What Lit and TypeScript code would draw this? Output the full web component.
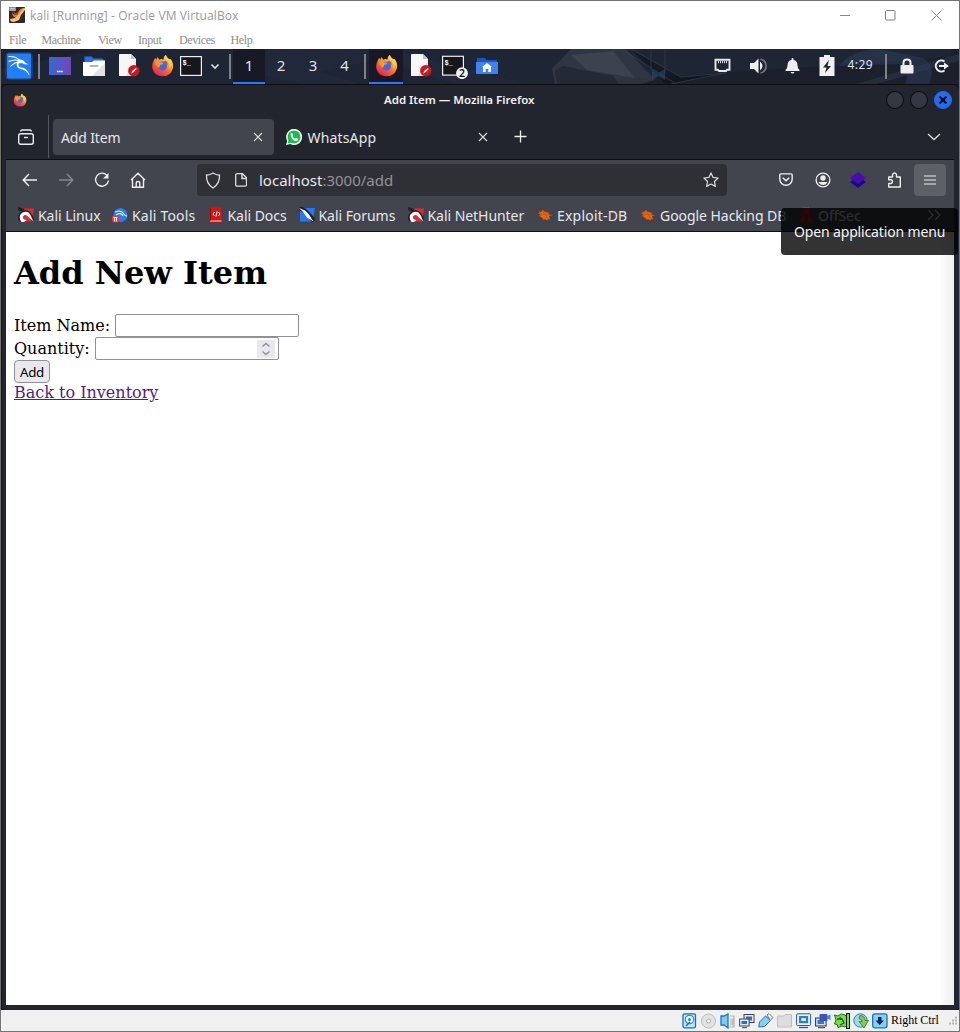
import { LitElement, html, svg, css } from "lit";
import { customElement } from "lit/decorators.js";

const icon = (w: number, h: number, body: unknown, vb = `0 0 ${w} ${h}`) =>
  html`<svg class="ic" width=${w} height=${h} viewBox=${vb} fill="none">${body}</svg>`;

const foxArt = svg`
  <defs>
    <linearGradient id="fx" x1="19" y1="2" x2="6" y2="22" gradientUnits="userSpaceOnUse">
      <stop offset="0" stop-color="#ffe94a"/><stop offset=".35" stop-color="#ffa52c"/><stop offset=".65" stop-color="#ff5a35"/><stop offset="1" stop-color="#e5264f"/>
    </linearGradient>
  </defs>
  <path d="M3 6.5 4.5 4l1 2L7 3l1.500 3Q11 4.500 13 6Q12.500 3 15.500 .8Q16 3.500 19 5.500Q20 6 20.500 5Q24 10 22.800 15Q20.500 23.300 12 23.300Q3.500 23 1.400 15Q.6 10.500 3 6.500Z" fill="url(#fx)"/>
  <circle cx="12" cy="12.600" r="4.800" fill="#3f6be8"/>
  <path d="M13 8a5 5 0 0 1 4 4q1-3-1.500-5Z" fill="#7a4ad8"/>
  <path d="M4 8.500Q6.500 6.500 9 8.500L13 9Q12.500 11 10 11.200Q8.500 12 9 13.500Q6.500 14.500 5.500 12Z" fill="#ff9a2e"/>
  <path d="M15.500 1Q15 5.500 18 8Q20.500 11 18.500 16Q23 12 20.500 6.500Q16 4 15.500 1Z" fill="#ffd83f" opacity=".75"/>`;
const fox = (s: number) => icon(s, s, foxArt, "0 0 24 24");

const kali = icon(30, 30, svg`
  <rect x="1" y="1" width="28" height="28" rx="5" fill="#1664e8" opacity=".35"/>
  <rect x="3" y="2.500" width="24" height="25" rx="1" fill="#1f80fa"/>
  <path d="M4.500 5.500Q12 5 16 9.500M4.500 10.500Q10 8 16 9.500M6.500 15.500Q10 11.500 16.500 10.500" stroke="#fff" stroke-width="1.100"/>
  <path d="M14 8.500Q19.500 8 21 11.500L24.500 13.500L20.500 13.200Q16 10.800 14.500 13.200Q14 16 18 16.500Q24 17.500 25.500 25Q22.500 18.800 17.500 18.200Q12.300 17.500 12.700 12.500Z" fill="#fff"/>`);

const folder = icon(22, 22, svg`
  <path d="M1.500 1.500h7l2 2H19q1.500 0 1.500 1.500V10h-19Z" fill="#2d6fe0"/>
  <path d="M0 7h9l2-1.500h11V20q0 1-1 1H1q-1 0-1-1Z" fill="#fff"/><path d="M22 8V20q0 1-1 1H9Z" fill="#e2e2e2"/>
  <rect x="6.500" y="10" width="9" height="2" rx="1" fill="#b5b5b5"/>`);

const doc = icon(22, 23, svg`
  <path d="M1.500 0H13l5 5v17h-17V.5Z" fill="#f7f7f7"/><path d="M13 0v5h5Z" fill="#c3c3c3"/><path d="M18 7v15H8Z" fill="#e2e2e2"/>
  <circle cx="15.800" cy="16.800" r="5.700" fill="#ce181d"/><path d="m13.200 19.500 1-2.500 3.600-3 .9 1-3.500 3.500Z" fill="#fff"/>`);

const termBody = svg`
  <rect x=".6" y="2.600" width="20.800" height="18.800" fill="#15171a" stroke="#eee" stroke-width="1.200"/>
  <text x="2.500" y="11" font-size="7" font-weight="700" fill="#fff" font-family="Liberation Mono, monospace">$_</text>`;
const term = icon(26, 24, termBody);
const termBadge = icon(28, 26, svg`<g transform="translate(0 .7)">${termBody}</g>
  <circle cx="20" cy="20.200" r="5.900" fill="#f2f2f2"/>
  <text x="20" y="24" text-anchor="middle" font-size="10.500" font-weight="600" fill="#111" font-family="Noto Sans, sans-serif">2</text>`);

const dragon = (c: string) => icon(16, 16, svg`
  <path d="M2 1.500h14l-2.500 13H6Z" fill=${c}/>
  <path d="M0 1.500 6 3.500M2.500 14Q0 7.500 6 5Q10 4 12 7.500l3.500 6" stroke="#222" stroke-width="3.200"/>
  <path d="M6 15H3.500Q-.5 9 4.500 5.500Q10 3 12.500 8l3 6.500L10.500 10Q7.500 6.500 5 9.500Q4.500 12.500 8.500 13Z" fill="#fff"/>`);

const bug = icon(16, 16, svg`
  <path d="m2 4.500 2 .5 2-2 1 1.500 3 .8 2 2 1.500 1.500-1.500.5 1 3-2-.5-.5 1.700-2-1.200-2.500.2-.3-1.500-2.200-1-.5-2.500Z" fill="#f0640f"/>
  <path d="m1 6.500 14 2M5 3l6.500 9.500M1.500 9 5 8M12 5l-1 2" stroke="#c9530c" stroke-width=".8"/>`);

const I = {
  vbox: icon(16, 16, svg`<rect width="16" height="16" rx="1" fill="#2b2a33"/><rect x="0" y="0" width="7" height="4" fill="#8a8a90"/><path d="M1 1.500h5M1 3h5" stroke="#ddd" stroke-width=".7"/><path d="M3 5q1 4 5 2.500l2-4q1-2 4-2.500h2l-3 3.500Q11 10 7 10.500Q3 10 3 5Z" fill="#ef7a30"/><path d="M4.500 5q3 2.500 5-.5l-1 4Q5 8 4.500 5Z" fill="#c9401c"/><path d="m1 12 5-1 4-4 4-5 2-1v2l-4 5-2 5-5 2Q1 15 1 12Z" fill="#ffc069"/>`),
  min: icon(11, 11, svg`<path d="M0 5.500h10" stroke="#888"/>`),
  max: icon(11, 11, svg`<rect x=".5" y=".5" width="9.500" height="9.500" rx="1" stroke="#808080"/>`),
  close: icon(11, 11, svg`<path d="m.5.5 10 10m0-10-10 10" stroke="#888"/>`),
  desk: icon(22, 22, svg`<defs><linearGradient id="dk"><stop stop-color="#3667d6"/><stop offset="1" stop-color="#7147b5"/></linearGradient></defs><rect y="2" width="22" height="18" fill="url(#dk)"/><path d="M8 16.500h6" stroke="#fff" stroke-width="1.300" stroke-dasharray="1.600 .5"/>`),
  chev: icon(10, 10, svg`<path d="m1.500 3.500 3.500 3.500 3.500-3.500" stroke="#ddd" stroke-width="1.700"/>`),
  home: icon(22, 20, svg`<path d="M1 2h8l1.500 2H20q1 0 1 1v4H1Z" fill="#1e55bd"/><path d="M0 6h22v11q0 1-1 1H1q-1 0-1-1Z" fill="#3d82f2"/><path d="m11 7 5 4h-1v5h-2.700v-3H9.700v3H7v-5H6Z" fill="#fff"/>`),
  net: icon(17, 15, svg`<path d="M1.500 1.800h14v10h-2.500l-1 1.200H5l-1-1.200H1.500Z" stroke="#e8e8e8" stroke-width="1.900"/><path d="M4.500 3v2.200M6.500 3v2.200M8.500 3v2.200M10.500 3v2.200M12.500 3v2.200" stroke="#ddd"/>`),
  vol: icon(18, 18, svg`<path d="M0 6h4l4.500-4.500v15L4 12H0Z" fill="#eee"/><path d="M10 4.500q5 4.500 0 9Z" fill="#eee"/><path d="M10.500 2Q16 3.500 16 9t-5.500 7" stroke="#70757d" stroke-width="1.700"/>`),
  bell: icon(15, 16, svg`<path d="M6.500 2V1q0-1 1-1t1 1v1q4 .7 4 5.500 0 3 2 4.500V13H.5v-1q2-1.500 2-4.500 0-4.800 4-5.500ZM5.500 14h4q-.5 1.500-2 1.500T5.500 14Z" fill="#eee"/>`),
  bat: icon(16, 21, svg`<path d="M5 0h6v2h4.500v19H.5V2H5Z" fill="#f0f0f0"/><path d="m10 5-6 7.500h3.500L6 18l6-7H8.500Z" fill="#1e212c"/>`),
  lock: icon(14, 16, svg`<rect x=".5" y="7" width="13" height="8.500" rx="1" fill="#eee"/><path d="M3.500 8V4.500Q3.500 1.500 7 1.500T10.500 4.500V8" stroke="#eee" stroke-width="2"/>`),
  out: icon(15, 16, svg`<path d="M10.500 3.500A5.500 5.500 0 1 0 10.500 12.500" stroke="#eee" stroke-width="2"/><path d="M5 7h5V4.500L15 8l-5 3.500V9H5Z" fill="#eee"/>`),
  view: icon(16, 16, svg`<rect x=".7" y="4.700" width="14.600" height="10.600" rx="2" stroke="#eee" stroke-width="1.400"/><path d="M2.500 2.500Q3 1 4 1h8q1 0 1.500 1.500" stroke="#eee" stroke-width="1.400"/><path d="M6 8.500h4" stroke="#eee" stroke-width="1.400"/>`),
  x: icon(10, 10, svg`<path d="m1 1 8 8m0-8-8 8" stroke="#ddd" stroke-width="1.100"/>`),
  wa: icon(16, 16, svg`<path d="M0 16 1.200 12A8 8 0 1 1 4.300 15Z" fill="#fff"/><circle cx="8" cy="7.900" r="6.500" fill="#19bd4a"/><path d="M1.500 14.500 3 10l2.500 3.500Z" fill="#19bd4a"/><path d="M4.500 5Q5 3.800 6.300 4.300L7.200 6.300 6.500 7.200Q7.500 9 9.300 9.700l.9-.9 2 1q.2 2-2 2.200-5-.5-5.700-7Z" fill="#fff"/>`),
  plus: icon(13, 13, svg`<path d="M6.500.5v12M.5 6.500h12" stroke="#eee" stroke-width="1.300"/>`),
  down: icon(14, 8, svg`<path d="m1 1 6 5.500L13 1" stroke="#ddd" stroke-width="1.300"/>`),
  back: icon(16, 14, svg`<path d="M15 7H1.500M7 1 1.200 7 7 13" stroke="#eee" stroke-width="1.400"/>`),
  fwd: icon(16, 14, svg`<path d="M1 7h13.500M9 1l5.800 6L9 13" stroke="#87888d" stroke-width="1.400"/>`),
  reload: icon(16, 16, svg`<path d="M12.800 3.200A6.500 6.500 0 1 0 14.500 8.500" stroke="#eee" stroke-width="1.400"/><path d="M14.500 1v5.500H9Z" fill="#eee"/>`),
  house: icon(16, 16, svg`<path d="M1 8 8 1.200 15 8M2.500 7v8.200h11V7M6.200 15v-4q0-1.500 1.800-1.500t1.800 1.500v4" stroke="#eee" stroke-width="1.400"/>`),
  shield: icon(16, 17, svg`<path d="M8 1q3.500 2.300 6.500 2Q15 11.500 8 16 1 11.500 1.500 3 4.500 3.300 8 1Z" stroke="#ddd" stroke-width="1.300"/>`),
  page: icon(12, 14, svg`<path d="M2.500.7H7.500l4 4v7q0 1.500-1.500 1.500H2.200Q.7 13.200.7 11.700V2.200Q.7.700 2.500.7Z" stroke="#ddd" stroke-width="1.300"/><path d="M7 1v4.500h4.500" stroke="#ddd" stroke-width="1.500"/>`),
  star: icon(16, 16, svg`<path d="m8 .9 2.100 4.500 5 .6-3.700 3.500 1 4.900L8 12l-4.400 2.400 1-4.900L.9 6l5-.6Z" stroke="#ddd" stroke-width="1.200" stroke-linejoin="round"/>`),
  pocket: icon(14, 14, svg`<path d="M2 .9h10q1.200 0 1.200 1.200V6A6.200 6.200 0 0 1 .8 6V2.100Q.8.900 2 .9Z" stroke="#eee" stroke-width="1.400"/><path d="m3.800 4.800 3.200 3 3.200-3" stroke="#eee" stroke-width="1.500"/>`),
  acct: icon(16, 16, svg`<circle cx="8" cy="8" r="6.900" stroke="#eee" stroke-width="1.300"/><circle cx="8" cy="6" r="2.700" fill="#eee"/><path d="M3.500 10h9q-1.500 3-4.500 3t-4.500-3Z" fill="#eee"/>`),
  layers: icon(16, 16, svg`<path d="m0 10 8-5 8 5-8 6Z" fill="#1e0786"/><path d="m0 6 8-6 8 6-8 6Z" fill="#460db0"/>`),
  ext: icon(15, 16, svg`<path d="M1.700 15V11.500H4Q5.500 11 5.500 9.500T4 7.800H1.700V5H5.500V3Q5.700 1 7.500 1T9.500 3v2h3.800v10Z" stroke="#eee" stroke-width="1.400" stroke-linejoin="round"/>`),
  menu: icon(12, 11, svg`<path d="M0 1h12M0 5h12M0 9h12" stroke="#eee" stroke-width="1.200"/>`),
  tools: icon(16, 16, svg`<circle cx="8.500" cy="8" r="7" fill="#2a7de8"/><path d="M3 5q6-2 8 1t4 3M4 8q5-3 7 1" stroke="#cfe5ff" stroke-width="1.300"/><rect y="8.500" width="7" height="7" rx="2" fill="#e23b3b"/><path d="M1.500 10.500h4M2.700 10.500v4M4.500 10.500v4" stroke="#fff"/>`),
  docs: icon(16, 16, svg`<rect x="1.500" y=".5" width="12" height="15" rx="1" fill="#d91313"/><path d="M2 14h11.500" stroke="#ddd"/><path d="M2.500 1v12.500" stroke="#93090c"/><path d="M6.500 5 5 7l1.500 2m4-4L12 7l-1.500 2M9 4.500l-1 5" stroke="#fff"/>`),
  forums: icon(16, 16, svg`<path d="M1 1h15l-2.500 13.500H1Z" fill="#2379f4"/><path d="M0 .5 6 4l5 5 4 5" stroke="#222" stroke-width="4.500"/><path d="M0 1 6 3.500l4 4 4.500 7L8 10.500 4 5Z" fill="#fff"/>`),
  off: icon(16, 16, svg`<path d="M5 0h6v8l3 4v3.500H9.500V8h-3v7.500H2V12l3-4Z" fill="#ff0d16"/>`),
  more: icon(14, 12, svg`<path d="m1 1 5 5-5 5M8 1l5 5-5 5" stroke="#ddd" stroke-width="1.300"/>`),
};

const st = (b: unknown) => icon(16, 16, b);
const statusIcons = [
  st(svg`<rect x="1" y=".8" width="12.500" height="14" rx="1.500" fill="#bfe6ff" stroke="#1670b8" stroke-width="1.300"/><circle cx="7.500" cy="6.500" r="4.200" fill="#fff" stroke="#2a92dc" stroke-width="1.300"/><circle cx="7.500" cy="6.500" r="1.500" fill="#2280c8"/><path d="m4 13 4-4" stroke="#1670b8" stroke-width="1.500"/>`),
  st(svg`<circle cx="7.500" cy="8" r="7" fill="#e2e2e2" stroke="#bcbcbc"/><circle cx="7.500" cy="8" r="2" fill="#f5f5f5" stroke="#aaa"/>`),
  st(svg`<path d="M1 3h3l4-2v14l-4-3H1Z" fill="#7ccbf7" stroke="#1678bb" stroke-width="1.300"/><path d="M10 3h4v11h-5M11 5.500v7M12.800 5.500v7" stroke="#b3b3b3" stroke-width="1.200"/>`),
  st(svg`<rect x="5" y="1.500" width="10" height="8" fill="#dbe9f7" stroke="#444"/><rect x="7" y="3.500" width="6" height="4" fill="#2d72d2"/><rect x=".6" y="6" width="9.500" height="7" fill="#dbe9f7" stroke="#444"/><rect x="2.500" y="8" width="5.500" height="3" fill="#2670d0"/><path d="M3 14.700h5" stroke="#444"/>`),
  st(svg`<path d="m.8 14 .7-5 6-6 5 4.500-6 6Z" fill="#86cdf8" stroke="#1b70b5" stroke-linejoin="round"/><path d="m9 2 2-1.500L15 4.500l-2.500 3Z" fill="#eee" stroke="#777"/>`),
  st(svg`<path d="M.5 3h6L8 1.500h6.500v12.500H.5Z" fill="#ddd" stroke="#bebebe"/>`),
  st(svg`<rect x=".6" y=".8" width="14" height="11.700" rx="1" fill="#eaf3fc" stroke="#265a9b"/><rect x="3" y="3" width="9.200" height="7.200" fill="#2b7ed2"/><rect x="5.300" y="5.200" width="4.600" height="2.800" fill="#e7f5ff"/><path d="M3 14.500h9" stroke="#265a9b" stroke-width="1.300"/>`),
  st(svg`<rect x=".6" y="5" width="10.500" height="8" fill="#d4e3f4" stroke="#333"/><rect x="2.500" y="7" width="6.500" height="4" fill="#3477c4"/><rect x="4.500" y="1" width="8" height="7" rx="1" fill="#3858b8"/><path d="m12 3 3.500-1.500V7L12 5.500" fill="#5a80da"/><path d="M3 14.700h7" stroke="#333"/>`),
  st(svg`<path d="M.5 2 4 3l3-2 4 1 2 2v8l-2 2-3-1-4 1.500-1-3L.5 11l1.500-4Z" fill="#79dc46" stroke="#237218"/><path d="M3 6h5l2 4-4 2M6 4l1 3" stroke="#176611" stroke-width="1.300"/><rect x="12" y="0" width="4" height="16" fill="#111"/><rect x="13" y="1" width="2" height="14" fill="#7fd65a"/>`),
  st(svg`<circle cx="7.500" cy="7.500" r="6.700" fill="#a5d6f5" stroke="#2a7fba"/><path d="M7 2.500q5 0 5 5h3.500L11 15 6 8.500h3Q9 6 6 5.500Z" fill="#7ed04a" stroke="#357d1a" stroke-width=".8"/>`),
  st(svg`<rect x=".7" y=".8" width="14.300" height="14" rx="2" fill="#86cff9" stroke="#1672b4" stroke-width="1.300"/><path d="M6 4h3.500v3.500H12L7.700 12 3.500 7.500H6Z" fill="#082b52"/>`),
];

@customElement("app-root")
export class AppRoot extends LitElement {
  static styles = css`
    :host { display: block; width: 960px; height: 1032px; overflow: hidden; }
    * { box-sizing: border-box; }
    .ic { display: block; flex: none; }
    .vm { height: 1032px; border: 1px solid #747474; display: flex; flex-direction: column; background: #fff; }
    .row { display: grid; align-items: center; white-space: nowrap; flex: none; }
    .title { height: 30px; padding-bottom: 2px; grid-template-columns: 8px 21px 810px 45px 46px 27px; font: 12px "Open Sans", "Noto Sans", sans-serif; color: #999; }
    .title .cap { letter-spacing: .1px; }
    .menu { height: 18px; grid-template-columns: 8px 32.500px 56.500px 40px 41px 51.500px 40px; font: 12px "Liberation Serif", serif; letter-spacing: -.4px; color: #8c8c8c; }
    .panel { height: 35px; position: relative; background: #1c202d; grid-template-columns: 3px 34px 11px 34px 35px 32.500px 29.500px 30px 18.500px 4.500px 32px 32px 31.500px 35.500px 5px 34px 7px 32px 34px 238px 35.500px 35.500px 33.500px 29px 37.500px 15px 33.500px 15px;
      color: #dfe3e8; font: 15px "Noto Sans", sans-serif; }
    .wall { position: absolute; left: 0; top: 0; }
    .panel > :not(.wall) { position: relative; }
    .panel > .ic { margin-bottom: 1.500px; }
    .sep { width: 2px; height: 25px; background: #7f828a; }
    .ws { height: 35px; width: 32px; display: grid; place-items: center; padding-bottom: 3px; }
    .on { background: #171a26; border-bottom: 2px solid #2777ff; padding-bottom: 1px; }
    .task { height: 35px; width: 34px; display: grid; place-items: center; padding-bottom: 0; }
    .clock { font-size: 12px; letter-spacing: .4px; padding-bottom: 4px; }
    .under { background: #151a2b; }
    .ff { flex: none; width: 958px; height: 926px; background: #22252e; border-top: 1px solid #0c0d11; border-left: 1px solid #14161c; border-radius: 6px 6px 5px 5px; padding: 0 5px 5px 4px; display: flex; flex-direction: column; font: 14px "Noto Sans", sans-serif; color: #e6e7ea; }
    .ftitle { height: 30px; grid-template-columns: 7px 371px 502px 24px 24px 20px; }
    .ftitle b { font-size: 11.500px; font-weight: 600; color: #f2f2f2; padding-bottom: 2px; }
    .dot { width: 18px; height: 18px; border-radius: 50%; background: #353743; border: 1px solid #08090c; }
    .dot.x { background: #246cf0; border-color: #246cf0; display: grid; place-items: center; }
    .tabs { height: 45px; padding-bottom: 1px; grid-template-columns: 12px 30px 5px 233px 21.500px 170.500px 36px 413px 20px; border-bottom: 1px solid #0d0e12; }
    .vline { width: 1px; height: 43px; background: #55575f; align-self: end; }
    .tab { width: 221px; height: 36px; border-radius: 4px; background: #43454e; display: flex; justify-content: space-between; align-items: center; padding: 0 11px 0 8px; letter-spacing: -.15px; }
    .tab > span, .tabs > .wide { padding-top: 2px; }
    .wide { letter-spacing: .15px; }
    .bars { background: #43454e; border-bottom: 1px solid #0d0e12; height: 72px; }
    .nav { height: 40px; grid-template-columns: 16px 36px 36px 35.500px 67.500px 582px 36px 35px 36.500px 27.500px 32px; }
    .url { width: 530px; height: 32px; border-radius: 4px; background: #2f3036; display: grid; grid-template-columns: 8px 30px 24px 444px 16px; align-items: center; font-size: 15px; }
    .url i { font-style: normal; color: #929398; }
    .mbtn { width: 32px; height: 32px; background: #5e6067; border-radius: 4px; display: grid; place-items: center; }
    .marks { height: 30px; grid-template-columns: 12px 94px 95.500px 91px 109px 129.500px 103px 158px 129px 14px; }
    .marks > span { display: flex; gap: 4px; align-items: center; letter-spacing: -.05px; }
    .marks .wide { letter-spacing: .2px; }
    .page { flex: 1; background: linear-gradient(90deg, #fff 932px, #efefef 948px); padding: 22.500px 8px 0; font: 16px/19px "DejaVu Serif", serif; color: #000; display: flex; flex-direction: column; align-items: flex-start; }
    h1 { font-size: 32px; line-height: 37px; margin: 0 0 22.500px; }
    .field { display: flex; align-items: center; height: 23px; gap: 5px; white-space: nowrap; }
    .box { width: 184px; height: 23px; border: 1px solid #8f8f9d; border-radius: 2px; background: #fff; display: flex; justify-content: flex-end; align-items: center; padding: 0 3px; }
    input { border: 0; outline: 0; background: none; padding: 0; margin: 0; flex: 1; min-width: 0; height: 19px; }
    .spin { width: 18px; height: 18px; background: #e9e9ed; display: grid; place-items: center; }
    button { width: 36px; height: 23px; border: 1px solid #8f8f9d; border-radius: 4px; background: #e9e9ed; font: 13.330px "Noto Sans", sans-serif; letter-spacing: -.3px; padding: 0; color: #000; line-height: 20px; }
    a { color: #551a8b; }
    .tip { position: absolute; left: 781px; top: 208px; width: 177px; height: 47px; border-radius: 4px; background: rgba(0,0,0,.8); color: #f5f5f5; font: 14px/47px "Noto Sans", sans-serif; letter-spacing: -.15px; padding-left: 13px; white-space: nowrap; }
    .status { height: 21px; background: #f0f0f0; grid-template-columns: 681px repeat(11, 19px) 56.500px 10px; font: 12px "Liberation Serif", serif; letter-spacing: -.05px; color: #000; }
  `;

  render() {
    const mark = (i: unknown, t: string, cls = "") => html`<span>${i}<span class=${cls}>${t}</span></span>`;
    return html`
      <div class="vm">
        <div class="row title"><span></span>${I.vbox}<span class="cap">kali [Running] - Oracle VM VirtualBox</span>${I.min}${I.max}${I.close}</div>
        <div class="row menu"><span></span><span>File</span><span>Machine</span><span>View</span><span>Input</span><span>Devices</span><span>Help</span></div>
        <div class="row panel">
          <svg class="wall" width="958" height="35" viewBox="0 0 958 35">
            <path d="M100 0h850v8L780 20 560 35H0V20Z" fill="#20293b" opacity=".5"/>
            <path d="M230 0 255 25 300 35h60l-40-12 55-12 80 24h70L390 0Z" fill="#27354a" opacity=".25"/>
            <path d="M551 20 570 0h55l29 31-14 4h-86Z" fill="#444955" opacity=".45"/>
            <path d="m570 6 42-4 22 27-48-8Z" fill="#4b505c" opacity=".5"/>
            <path d="m554 22 8-5 50 10 6 8h-62Z" fill="#242936"/>
            <path d="M625 3 675 35M650 0v22M664 0v24M630 0l50 28 45-4-60 12" stroke="#566070" opacity=".3"/>
            <path d="m651 20 6 4 7-4v11l-7-4-6 4Z" fill="#31517c" opacity=".5"/>
            <path d="M838 17q18-22 56-14l28 6q14 8 6 26h-24q6-16-6-20Z" fill="#334b70" opacity=".35"/>
            <path d="m855 35 103-30v7l-83 23Z" fill="#344055" opacity=".4"/>
          </svg>
          <span></span>${kali}<span class="sep"></span>${I.desk}${folder}${doc}${fox(23)}${term}${I.chev}<span class="sep"></span>
          <span class="ws on">1</span><span class="ws">2</span><span class="ws">3</span><span class="ws">4</span><span class="sep"></span>
          <span class="task on">${fox(23)}</span><span></span>${doc}${termBadge}${I.home}${I.net}${I.vol}${I.bell}${I.bat}<span class="clock">4:29</span><span class="sep"></span>${I.lock}${I.out}
        </div>
        <div class="under">
          <div class="ff">
            <div class="row ftitle"><span></span>${fox(14)}<b>Add Item — Mozilla Firefox</b><span class="dot"></span><span class="dot"></span><span class="dot x">${icon(8, 8, svg`<path d="m.5.5 7 7m0-7-7 7" stroke="#080c18" stroke-width="2"/>`)}</span></div>
            <div class="row tabs"><span></span>${I.view}<span class="vline"></span>
              <span class="tab"><span>Add Item</span>${I.x}</span>${I.wa}<span class="wide">WhatsApp</span>${I.x}${I.plus}${I.down}</div>
            <div class="bars">
              <div class="row nav"><span></span>${I.back}${I.fwd}${I.reload}${I.house}
                <div class="url"><span></span>${I.shield}${I.page}<span>localhost<i>:3000/add</i></span>${I.star}</div>
                ${I.pocket}${I.acct}${I.layers}${I.ext}<span class="mbtn">${I.menu}</span></div>
              <div class="row marks"><span></span>${mark(dragon("#e22935"), "Kali Linux")}${mark(I.tools, "Kali Tools", "wide")}${mark(I.docs, "Kali Docs")}${mark(I.forums, "Kali Forums")}${mark(dragon("#e22935"), "Kali NetHunter")}${mark(bug, "Exploit-DB", "wide")}${mark(bug, "Google Hacking DB")}${mark(I.off, "OffSec")}${I.more}</div>
            </div>
            <div class="page">
              <h1>Add New Item</h1>
              <div class="field"><label>Item Name:</label><span class="box"><input aria-label="Item Name" /></span></div>
              <div class="field"><label>Quantity:</label><span class="box"><input aria-label="Quantity" /><span class="spin">${icon(10, 14, svg`<path d="m1.500 4.500 3.500-3 3.500 3M1.500 9.500l3.500 3 3.500-3" stroke="#8f8f9d" stroke-width="1.500"/>`)}</span></span></div>
              <button>Add</button>
              <a href="#">Back to Inventory</a>
            </div>
          </div>
        </div>
        <div class="row status"><span></span>${statusIcons}<span>Right Ctrl</span>${icon(10, 10, svg`<path d="M7 1.500h2M4 4.500h2m1 0h2M1 7.500h2m1 0h2m1 0h2" stroke="#b5b5b5" stroke-width="2"/>`)}</div>
      </div>
      <div class="tip">Open application menu</div>
    `;
  }
}
